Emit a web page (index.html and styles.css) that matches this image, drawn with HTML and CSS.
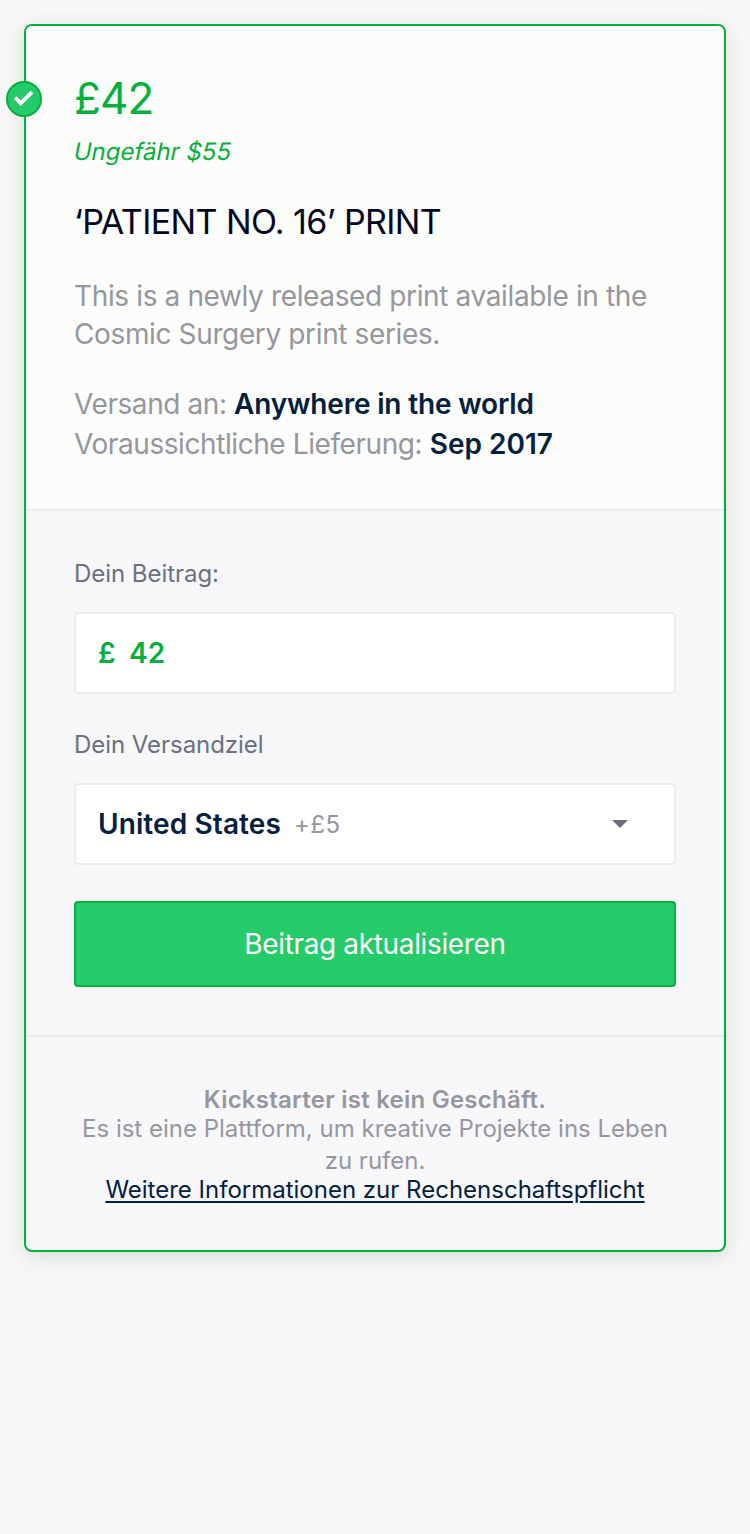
FILE: index.html
```html
<!DOCTYPE html>
<html lang="de">
<head>
<meta charset="utf-8">
<title>Beitrag</title>
<link rel="stylesheet" href="styles.css">
</head>
<body>
<main class="card">
  <svg class="badge" viewBox="0 0 36 36"><circle cx="18" cy="18" r="17" fill="#25cb68" stroke="#05b03c" stroke-width="2"/><path d="M9.2 16.6l5.5 5.6L26 11.2" fill="none" stroke="#fff" stroke-width="3.8"/></svg>
  <section class="reward">
    <div class="price">£42</div>
    <div class="approx">Ungefähr $55</div>
    <h1 class="title">‘PATIENT NO. 16’ PRINT</h1>
    <p class="description">This is a newly released print available in the<br>Cosmic Surgery print series.</p>
    <div class="facts">
      <div>Versand an: <b class="place">Anywhere in the world</b></div>
      <div>Voraussichtliche Lieferung: <b class="date">Sep 2017</b></div>
    </div>
  </section>
  <section class="pledge">
    <div class="label">Dein Beitrag:</div>
    <div class="field amount"><span class="currency">£</span><span>42</span></div>
    <div class="label label-destination">Dein Versandziel</div>
    <div class="field destination"><b>United States</b><span class="cost">+£5</span><svg class="caret" viewBox="0 0 16 8"><path d="M0 0h16L8 8z" fill="#6b7080"/></svg></div>
    <button class="submit">Beitrag aktualisieren</button>
  </section>
  <footer class="notice">
    <b class="notice-title">Kickstarter ist kein Geschäft.</b>
    <p class="notice-text">Es ist eine Plattform, um kreative Projekte ins Leben<br>zu rufen.</p>
    <a class="notice-link">Weitere Informationen zur Rechenschaftspflicht</a>
  </footer>
</main>
</body>
</html>
```
FILE: styles.css
```css
* { box-sizing: border-box; }
body { margin: 0; padding: 24px; min-height: 1534px; background: #f7f7f5; font-family: Inter, "Liberation Sans", sans-serif; font-variant-ligatures: none; color: #96969f; }
h1, p { margin: 0; font-weight: 400; }
b { font-weight: 600; }
.card { position: relative; height: 1228px; border: 2px solid #05b03c; border-radius: 8px; background: #f7f7fa; box-shadow: 0 4px 20px rgba(0,0,0,.12); }
.badge { position: absolute; left: -20px; top: 55px; width: 36px; height: 36px; }
.reward { height: 485px; padding: 45px 48px 0; background: #fcfcfa; border-bottom: 2px solid #ececec; border-radius: 6px 6px 0 0; white-space: nowrap; }
.price { height: 54px; line-height: 54px; font-size: 44px; letter-spacing: -.9px; color: #05b03c; }
.approx { width: max-content; height: 32px; margin-top: 11px; line-height: 32px; font-size: 24px; transform: skewX(-11deg); color: #05b03c; }
.title { height: 44px; margin-top: 32px; line-height: 44px; font-size: 34px; letter-spacing: -.6px; color: #020621; }
.description { margin-top: 33px; line-height: 38px; font-size: 28px; letter-spacing: -.37px; }
.facts { margin-top: 31px; line-height: 40px; font-size: 28px; letter-spacing: -.42px; }
.facts b, .destination b { color: #03213f; }
.place { letter-spacing: -.18px; }
.date { letter-spacing: 0; }
.pledge { height: 526px; padding: 46px 48px 0; border-bottom: 2px solid #ececec; }
.label { height: 34px; line-height: 34px; font-size: 24px; color: #6b7080; letter-spacing: -.05px; }
.label-destination { margin-top: 34px; }
.field { display: flex; align-items: center; height: 82px; margin-top: 21px; padding: 0 22px; border: 2px solid #ececec; border-radius: 4px; background: #fff; font-size: 28px; }
.amount { color: #05b03c; font-weight: 600; }
.currency { width: 31px; }
.destination b { letter-spacing: .1px; }
.cost { margin-left: 13px; font-size: 24px; letter-spacing: .5px; }
.caret { width: 16px; height: 8px; margin-left: auto; margin-right: 24px; }
.submit { display: block; width: 100%; height: 86px; margin-top: 36px; padding: 0; border: 2px solid #05b03c; border-radius: 4px; background: #25cb68; color: #fff; font: 400 28px Inter, sans-serif; letter-spacing: -.35px; }
.notice { padding-top: 47px; text-align: center; font-size: 24px; line-height: 32px; white-space: nowrap; }
.notice-title, .notice-link { display: block; }
.notice-title { height: 29px; letter-spacing: .24px; }
.notice-text { height: 61px; }
.notice-link { color: #03213f; text-decoration: underline 2px; text-underline-offset: 3px; }
```
